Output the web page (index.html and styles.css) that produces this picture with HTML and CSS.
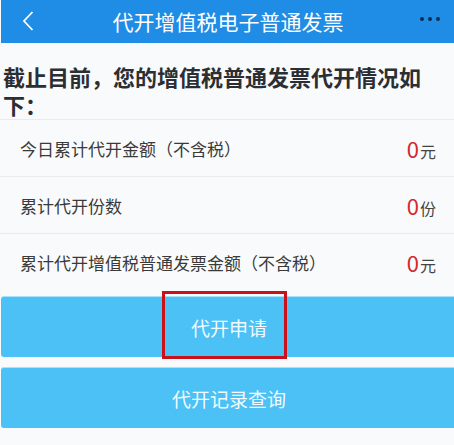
FILE: index.html
```html
<!DOCTYPE html>
<html lang="zh-CN">
<head>
    <meta charset="UTF-8">
    <meta name="viewport" content="width=device-width, initial-scale=1.0">
    <title>代开增值税电子普通发票</title>
    <link rel="stylesheet" href="styles.css">
</head>
<body>
    <header class="topbar">
        <span class="back">
            <svg viewBox="0 0 12 20" width="12" height="20">
                <path d="M10.5 1 L2 10 L10.5 19" fill="none" stroke="#fff" stroke-width="1.8"></path>
            </svg>
        </span>
        <h1 class="title">代开增值税电子普通发票</h1>
        <span class="more">
            <i></i><i></i><i></i>
        </span>
    </header>

    <h2 class="summary">截止目前，您的增值税普通发票代开情况如下：</h2>

    <ul class="stats">
        <li class="stat">
            <span class="label">今日累计代开金额（不含税）</span>
            <span class="value"><em>0</em>元</span>
        </li>
        <li class="stat">
            <span class="label">累计代开份数</span>
            <span class="value"><em>0</em>份</span>
        </li>
        <li class="stat">
            <span class="label">累计代开增值税普通发票金额（不含税）</span>
            <span class="value"><em>0</em>元</span>
        </li>
    </ul>

    <div class="actions">
        <button class="btn btn-apply">
            代开申请
            <span class="mark"></span>
        </button>
        <button class="btn">代开记录查询</button>
    </div>
</body>
</html>
```

FILE: styles.css
```css
* {
  margin: 0;
  padding: 0;
  box-sizing: border-box;
}

body {
  font-family: "Noto Sans CJK SC", "Noto Sans", sans-serif;
  background-color: #f9fafb;
  width: 454px;
  overflow: hidden;
}

.topbar {
  height: 43px;
  background-color: #1f8de6;
  display: flex;
  align-items: center;
  justify-content: space-between;
  padding: 0 14px 0 21px;
  margin-left: 1px;
}

.back {
  display: flex;
  width: 40px;
  margin-top: -2px;
}

.title {
  font-size: 21px;
  font-weight: normal;
  color: #fff;
  line-height: 43px;
  margin-right: 6px;
}

.more {
  display: flex;
  gap: 4px;
  width: 40px;
  justify-content: flex-end;
  margin-top: -6px;
}

.more i {
  display: block;
  width: 4px;
  height: 4px;
  border-radius: 50%;
  background-color: #0d2c4f;
}

.summary {
  font-size: 22px;
  font-weight: bold;
  line-height: 28px;
  color: #2b2f33;
  padding: 19px 20px 1px 3px;
}

.stats {
  list-style: none;
}

.stat {
  height: 57px;
  border-top: 1px solid #ebebeb;
  display: flex;
  align-items: center;
  justify-content: space-between;
  padding: 0 18px 0 20px;
}

.label {
  font-size: 17px;
  color: #3a3a3a;
}

.value {
  font-size: 16px;
  color: #444;
}

.value em {
  font-style: normal;
  font-size: 22px;
  color: #d4282c;
  margin-right: 1px;
}

.actions {
  display: flex;
  flex-direction: column;
  gap: 10px;
  padding: 6px 0 0 1px;
}

.btn {
  position: relative;
  height: 61px;
  width: 456px;
  border: none;
  border-top: 1px solid #a8e2fb;
  border-radius: 3px;
  background-color: #4bc1f6;
  color: #f2fbff;
  font-family: inherit;
  font-size: 19px;
}

.mark {
  position: absolute;
  left: 161px;
  top: -6px;
  width: 125px;
  height: 68px;
  border: 3px solid #c9111b;
}
```
